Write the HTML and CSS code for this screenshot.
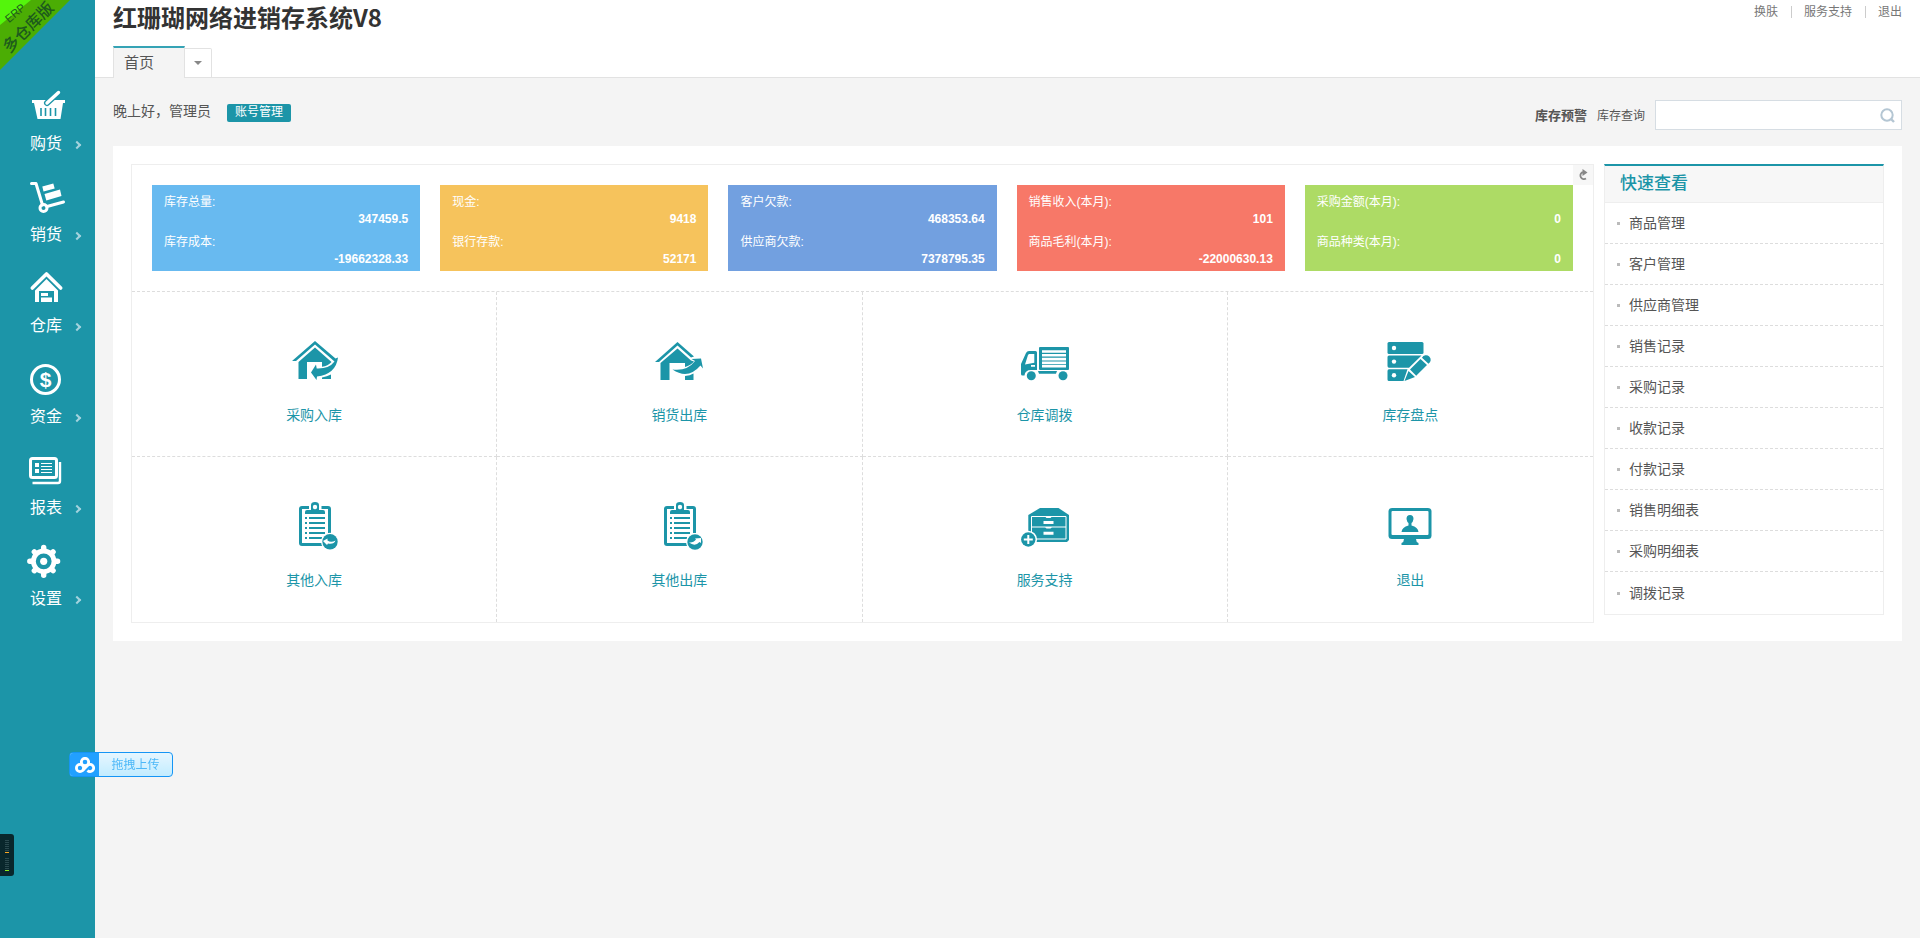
FILE: index.html
```
<!DOCTYPE html>
<html lang="zh-CN">
<head>
    <meta charset="UTF-8">
    <meta name="viewport" content="width=device-width, initial-scale=1.0">
    <title>红珊瑚网络进销存系统V8</title>
    <link rel="stylesheet" href="styles.css">
</head>
<body>
    <div class="sidebar">
        <svg class="ribbon" width="72" height="72" viewBox="0 0 72 72">
            <path d="M0 0H70L0 70Z" fill="#4bad04"/>
            <path d="M0 0H31L0 25Z" fill="#54f50c"/>
            <text class="ribbon-small" x="15" y="17" transform="rotate(-40 15 13)">ERP</text>
            <text class="ribbon-big" x="28" y="33" transform="rotate(-45 28 27)">多仓库版</text>
        </svg>
        <nav class="menu">
            <a href="#" class="menu-item">
                <svg class="menu-icon" viewBox="-3 0 42 36">
                    <path d="M2 13H35V16H33L30.500 32H7.500L4 16H2Z" fill="#fff"/>
                    <path d="M11 21V29M15.500 21V29M20.500 21V29M25.500 21V29" stroke="#1c95a8" stroke-width="1.600"/>
                    <path d="M28.500 5.500L17 16" stroke="#1c95a8" stroke-width="6" stroke-linecap="round"/>
                    <path d="M28.500 5.500L17 16" stroke="#fff" stroke-width="3.400" stroke-linecap="round"/>
                </svg>
                <span class="menu-text">购货</span>
            </a>
            <a href="#" class="menu-item">
                <svg class="menu-icon" viewBox="-3 0 42 36">
                    <path d="M1.500 5.500H6L12.500 27M17 28.500L33.500 24" fill="none" stroke="#fff" stroke-width="3" stroke-linecap="round" stroke-linejoin="round"/>
                    <circle cx="13.500" cy="30" r="3.500" fill="none" stroke="#fff" stroke-width="3"/>
                    <path d="M12.300 8.500L23.300 5.500L24.700 10.500L13.500 13.500ZM14.500 16L30 11.500L31.500 18L16.300 22.500Z" fill="#fff"/>
                </svg>
                <span class="menu-text">销货</span>
            </a>
            <a href="#" class="menu-item">
                <svg class="menu-icon" viewBox="-3 0 42 36">
                    <path d="M2.300 19L16.500 5L30.700 19" fill="none" stroke="#fff" stroke-width="3.600" stroke-linecap="round" stroke-linejoin="round"/>
                    <path d="M5 33V21.500L16.500 10L28 21.500V33H24V22H9V33Z" fill="#fff"/>
                    <path d="M11 24H18V27H11ZM11 28.500H22V33H11Z" fill="#fff"/>
                </svg>
                <span class="menu-text">仓库</span>
            </a>
            <a href="#" class="menu-item">
                <svg class="menu-icon" viewBox="-3 0 42 36">
                    <circle cx="15.500" cy="19.500" r="14" fill="none" stroke="#fff" stroke-width="3"/>
                    <text class="coin" x="15.500" y="27">$</text>
                </svg>
                <span class="menu-text">资金</span>
            </a>
            <a href="#" class="menu-item">
                <svg class="menu-icon" viewBox="-3 0 42 36">
                    <rect x="0.500" y="7.500" width="26" height="19" rx="2" fill="none" stroke="#fff" stroke-width="3"/>
                    <path d="M30 11V30Q30 32 28 32H2.500" fill="none" stroke="#fff" stroke-width="2.400"/>
                    <path d="M5 12H9V16H5ZM5 18H9V22H5Z" fill="#fff"/>
                    <path d="M11 12.500H22M11 15.500H22M11 18.500H22M11 21.500H22" stroke="#fff"/>
                </svg>
                <span class="menu-text">报表</span>
            </a>
            <a href="#" class="menu-item">
                <svg class="menu-icon" viewBox="-3 0 42 36">
                    <g stroke="#fff" stroke-width="5.400" stroke-linecap="round">
                        <path d="M13.700 5.500V8M13.700 30.700V33.200M-.200 19.300H2M25.300 19.300H27.600"/>
                        <path d="M4.300 9.900L6 11.600M21.500 27.100L23.100 28.700M4.300 28.700L6 27.100M21.500 11.600L23.100 9.900"/>
                    </g>
                    <circle cx="13.700" cy="19.300" r="10.300" fill="none" stroke="#fff" stroke-width="4.800"/>
                    <circle cx="13.700" cy="19.300" r="3.600" fill="#fff"/>
                </svg>
                <span class="menu-text">设置</span>
            </a>
        </nav>
    </div>

    <div class="main">
        <div class="header">
            <div class="header-top">
                <h1>红珊瑚网络进销存系统V8</h1>
                <div class="top-links">
                    <a href="#">换肤</a>
                    <a href="#">服务支持</a>
                    <a href="#">退出</a>
                </div>
            </div>
            <div class="tabs">
                <a href="#" class="tab">首页</a>
                <button class="tab-more" aria-label="更多"></button>
            </div>
        </div>

        <div class="content">
            <div class="toolbar">
                <div class="greeting">
                    <span>晚上好，管理员</span>
                    <button class="account">账号管理</button>
                </div>
                <div class="search">
                    <a href="#" class="warning">库存预警</a>
                    <label for="searchInput">库存查询</label>
                    <div class="search-box">
                        <input type="text" id="searchInput">
                        <svg class="search-icon" width="16" height="16" viewBox="0 0 16 16">
                            <circle cx="7" cy="7" r="5.700" fill="none" stroke="#b4c6d3" stroke-width="2"/>
                            <path d="M11 11L14 14" stroke="#b4c6d3" stroke-width="2.400"/>
                        </svg>
                    </div>
                </div>
            </div>

            <div class="panel">
                <div class="overview">
                    <button class="refresh" aria-label="刷新">
                        <svg width="12" height="12" viewBox="0 0 12 12">
                            <path d="M7 3.500H5A3.600 3.600 0 1 0 9 9.500" fill="none" stroke="#888" stroke-width="1.800"/>
                            <path d="M5.500 0L10.500 3.500L5.500 7Z" fill="#888"/>
                        </svg>
                    </button>
                    <div class="cards">
                        <dl class="card blue">
                            <dt>库存总量:</dt><dd>347459.5</dd>
                            <dt>库存成本:</dt><dd>-19662328.33</dd>
                        </dl>
                        <dl class="card orange">
                            <dt>现金:</dt><dd>9418</dd>
                            <dt>银行存款:</dt><dd>52171</dd>
                        </dl>
                        <dl class="card indigo">
                            <dt>客户欠款:</dt><dd>468353.64</dd>
                            <dt>供应商欠款:</dt><dd>7378795.35</dd>
                        </dl>
                        <dl class="card red">
                            <dt>销售收入(本月):</dt><dd>101</dd>
                            <dt>商品毛利(本月):</dt><dd>-22000630.13</dd>
                        </dl>
                        <dl class="card green">
                            <dt>采购金额(本月):</dt><dd>0</dd>
                            <dt>商品种类(本月):</dt><dd>0</dd>
                        </dl>
                    </div>

                    <div class="shortcuts">
                        <a href="#" class="shortcut">
                            <svg class="shortcut-icon" viewBox="0 0 48 48">
                                <path d="M2 24L25 4L45.500 21.500L48 20.500Q46 37 27 39.500L26.500 43L21 35.500L26 27.500L26.700 31.500Q39 32 44.500 24.500L25 7.500L6 24Z"/>
                                <path d="M25 10.500L41.500 25Q38 29 32 29.700V25H17V42H8.500V25Z"/>
                                <path d="M32 40.500Q37 39.500 41 37.500V42H32Z"/>
                            </svg>
                            <span>采购入库</span>
                        </a>
                        <a href="#" class="shortcut">
                            <svg class="shortcut-icon" viewBox="0 0 48 48">
                                <path d="M0 25L22.500 5L39 19.500L36 20.500L22.500 8.500L4 25Z"/>
                                <path d="M22.500 11.500L36 23.500L39 24.500Q36 28 30 30V26H14.500V43H5.500V26Z"/>
                                <path d="M17.500 32.500Q32 34.500 40 24L36.500 22L46 21.500L48 31.500L45.500 28.500Q33 43 17.500 32.500Z"/>
                                <path d="M30 39Q35 38.500 38.500 36.500V43H30Z"/>
                            </svg>
                            <span>销货出库</span>
                        </a>
                        <a href="#" class="shortcut">
                            <svg class="shortcut-icon" viewBox="0 0 48 48">
                                <rect x="18" y="10" width="30" height="23" rx="1"/>
                                <path d="M21 14.500H45M21 18.300H45M21 22.100H45M21 25.900H45M21 29.300H45" stroke="#fff" stroke-width="2.600"/>
                                <path d="M8 14H14.500Q16 14 16 15.500V33H10Q4 33 3.500 38.500H1.500Q0 38.500 0 37V27L5 16Q6 14 8 14Z"/>
                                <path d="M8 17H13.300V25.700L4 27.500L7 18ZM10 28H14V29.700H10Z" fill="#fff"/>
                                <path d="M17 34H36L35 36.700H18Z"/>
                                <circle cx="10.300" cy="38.700" r="4.500"/>
                                <circle cx="42" cy="38.700" r="4.500"/>
                            </svg>
                            <span>仓库调拨</span>
                        </a>
                        <a href="#" class="shortcut">
                            <svg class="shortcut-icon" viewBox="0 0 48 48">
                                <rect x="1.500" y="5" width="36" height="12" rx="1.500"/>
                                <path d="M3 18.500H35.500L23 30.700H3Q1.500 30.700 1.500 29V20Q1.500 18.500 3 18.500ZM3 32.200H21.500L17.500 44H3Q1.500 44 1.500 42.500V34Q1.500 32.200 3 32.200Z"/>
                                <circle cx="8" cy="11" r="2.200" fill="#fff"/>
                                <circle cx="8" cy="24.600" r="2.200" fill="#fff"/>
                                <circle cx="8" cy="38.200" r="2.200" fill="#fff"/>
                                <path d="M18.500 44L22.500 34L29 40ZM24 32.500L34.500 22L41 28L30.200 38.800ZM36 20.800A4.600 4.600 0 1 1 42.500 26.800Z"/>
                            </svg>
                            <span>库存盘点</span>
                        </a>
                        <a href="#" class="shortcut">
                            <svg class="shortcut-icon" viewBox="0 0 48 48">
                                <path d="M19 5.500H12Q10.500 5.500 10.500 7V41Q10.500 42.500 12 42.500H33M31.500 5.500H38Q39.500 5.500 39.500 7V31" fill="none" stroke="#1c95a8" stroke-width="3"/>
                                <path d="M21 8V3Q21 0 25 0T29 3V8H33Q35 8 35 10V12H15V10Q15 8 17 8Z"/>
                                <circle cx="25" cy="5" r="2.200" fill="#fff"/>
                                <path d="M15 16H17M19 16H35M15 21H17M19 21H35M15 26H17M19 26H35M15 31H17M19 31H35M15 36H17M19 36H32" stroke="#1c95a8" stroke-width="2"/>
                                <circle cx="40" cy="39.700" r="9" fill="#fff"/>
                                <circle cx="40" cy="39.700" r="7.700"/>
                                <path d="M33 39L37.500 36.500L37.500 38.500Q41 41 45.500 38.500Q44 42.500 38 41.500L37 43Z" fill="#fff"/>
                            </svg>
                            <span>其他入库</span>
                        </a>
                        <a href="#" class="shortcut">
                            <svg class="shortcut-icon" viewBox="0 0 48 48">
                                <path d="M19 5.500H12Q10.500 5.500 10.500 7V41Q10.500 42.500 12 42.500H33M31.500 5.500H38Q39.500 5.500 39.500 7V31" fill="none" stroke="#1c95a8" stroke-width="3"/>
                                <path d="M21 8V3Q21 0 25 0T29 3V8H33Q35 8 35 10V12H15V10Q15 8 17 8Z"/>
                                <circle cx="25" cy="5" r="2.200" fill="#fff"/>
                                <path d="M15 16H17M19 16H35M15 21H17M19 21H35M15 26H17M19 26H35M15 31H17M19 31H35M15 36H17M19 36H32" stroke="#1c95a8" stroke-width="2"/>
                                <circle cx="40" cy="40" r="9" fill="#fff"/>
                                <circle cx="40" cy="40" r="7.700"/>
                                <path d="M34 40.500Q38.500 41 41 37.500L40 36.500L46 36V41L44.500 40Q40 45 34 40.500Z" fill="#fff"/>
                            </svg>
                            <span>其他出库</span>
                        </a>
                        <a href="#" class="shortcut">
                            <svg class="shortcut-icon" viewBox="0 0 48 48">
                                <path d="M19 6H37.500L48 13V38L46 40H9L7.300 38V13Z"/>
                                <path d="M10.500 14.500H45V37H10.500ZM10.500 25H45" fill="none" stroke="#fff"/>
                                <path d="M24 14.500H31L29.500 16H25.500ZM24 25H31L29.500 26.500H25.500ZM22.500 19H32.500V22H22.500ZM22.500 29.700H32.500V32.700H22.500Z" fill="#fff"/>
                                <circle cx="7.300" cy="37.500" r="8.800" fill="#fff"/>
                                <circle cx="7.300" cy="37.500" r="7.200"/>
                                <path d="M7.300 33V42M2.800 37.500H11.800" stroke="#fff" stroke-width="2"/>
                            </svg>
                            <span>服务支持</span>
                        </a>
                        <a href="#" class="shortcut">
                            <svg class="shortcut-icon" viewBox="0 0 48 48">
                                <rect x="2.500" y="6" width="43" height="31" rx="3.500"/>
                                <rect x="5.500" y="9" width="37" height="24" rx="1" fill="#fff"/>
                                <path d="M18 37H30Q30 40 32.500 41V43H15.500V41Q18 40 18 37Z"/>
                                <path d="M24 13Q27.500 13 27.500 17Q27 20 25.500 21V23.500Q32 25 32.500 30H15.500Q16 25 22.500 23.500V21Q21 20 20.500 17Q20.500 13 24 13Z"/>
                            </svg>
                            <span>退出</span>
                        </a>
                    </div>
                </div>

                <div class="quick">
                    <h2>快速查看</h2>
                    <ul>
                        <li><a href="#">商品管理</a></li>
                        <li><a href="#">客户管理</a></li>
                        <li><a href="#">供应商管理</a></li>
                        <li><a href="#">销售记录</a></li>
                        <li><a href="#">采购记录</a></li>
                        <li><a href="#">收款记录</a></li>
                        <li><a href="#">付款记录</a></li>
                        <li><a href="#">销售明细表</a></li>
                        <li><a href="#">采购明细表</a></li>
                        <li><a href="#">调拨记录</a></li>
                    </ul>
                </div>
            </div>
        </div>
    </div>

    <!-- floating widgets -->
    <button class="upload">
        <span class="upload-logo">
            <svg width="20" height="16" viewBox="0 0 20 16">
                <g fill="none" stroke="#fff" stroke-width="2.800">
                    <circle cx="10" cy="5" r="3.700"/>
                    <circle cx="5" cy="11" r="3.600"/>
                    <path d="M7.600 13.500L12.500 8.500A3.600 3.600 0 1 1 12.500 13.500"/>
                </g>
            </svg>
        </span>
        <span class="upload-text">拖拽上传</span>
    </button>
    <div class="meter">
        <svg width="4" height="31" viewBox="0 0 4 31">
            <path d="M2 0V12M2 18V30" stroke="#2b4a4f" stroke-width="4" stroke-dasharray="1 1"/>
            <path d="M0 12H4V13H0Z" fill="#f9a825"/>
            <path d="M0 30H4V31H0Z" fill="#8bec1e"/>
        </svg>
    </div>
</body>
</html>
```
FILE: styles.css
```
*,
*::before,
*::after {
    box-sizing: border-box;
}

body {
    margin: 0;
    min-height: 100vh;
    display: flex;
    background-color: #f4f4f4;
    color: #555;
    font-family: "Liberation Sans", "Noto Sans CJK SC", sans-serif;
    font-size: 12px;
}

a {
    color: inherit;
    text-decoration: none;
}

button {
    border: none;
    padding: 0;
    font-family: inherit;
    cursor: pointer;
}

/* left menu */
.sidebar {
    position: relative;
    flex: none;
    width: 95px;
    padding-top: 87px;
    background-color: #1c95a8;
}

.ribbon {
    position: absolute;
    top: 0;
    left: 0;
    overflow: visible;
}

.ribbon text {
    fill: #1d5a1d;
    text-anchor: middle;
}

.ribbon-small {
    font-size: 11px;
}

.ribbon-big {
    font-size: 16px;
    font-weight: 500;
}

.menu-item {
    position: relative;
    display: flex;
    flex-direction: column;
    gap: 11px;
    padding: 0 0 24px 27px;
    color: #fff;
}

.menu-icon {
    width: 42px;
    height: 36px;
}

.menu-text {
    padding-left: 3px;
    font-size: 16px;
    line-height: 20px;
}

.menu-item::after {
    content: "";
    position: absolute;
    right: 15px;
    bottom: 30px;
    width: 6px;
    height: 6px;
    border-top: 2px solid #a4d3de;
    border-right: 2px solid #a4d3de;
    transform: rotate(45deg);
}

.coin {
    fill: #fff;
    font-size: 21px;
    font-weight: bold;
    text-anchor: middle;
}

/* header */
.main {
    flex: 1;
    min-width: 0;
}

.header {
    padding: 0 18px;
    background-color: #fff;
    border-bottom: 1px solid #e2e2e2;
}

.header-top {
    display: flex;
    justify-content: space-between;
    height: 46px;
}

h1 {
    margin: 0;
    color: #333;
    font-family: "Noto Sans CJK SC", sans-serif;
    font-size: 24px;
    line-height: 34px;
}

.top-links {
    display: flex;
    align-items: center;
    height: 24px;
    color: #777;
    line-height: 12px;
}

.top-links a + a {
    margin-left: 13px;
    padding-left: 12px;
    border-left: 1px solid #ccc;
}

.tabs {
    display: flex;
    align-items: flex-end;
    margin-bottom: -1px;
}

.tab {
    width: 72px;
    height: 32px;
    padding-left: 10px;
    border: 1px solid #e2e2e2;
    border-top: 2px solid #35a3b5;
    border-bottom: none;
    background-color: #f4f4f4;
    font-size: 15px;
    line-height: 30px;
}

.tab-more {
    display: flex;
    align-items: center;
    justify-content: center;
    width: 27px;
    height: 30px;
    border: 1px solid #e2e2e2;
    border-left: none;
    border-radius: 0 2px 0 0;
    background-color: #fff;
}

.tab-more::after {
    content: "";
    border: 4px solid transparent;
    border-top-color: #888;
    border-bottom: none;
}

/* content */
.content {
    padding: 22px 18px;
}

.toolbar {
    display: flex;
    justify-content: space-between;
    height: 46px;
}

.greeting {
    display: flex;
    align-items: flex-start;
    gap: 16px;
    font-size: 14px;
    line-height: 22px;
}

.account {
    width: 64px;
    height: 18px;
    margin-top: 4px;
    padding-bottom: 2px;
    border-radius: 2px;
    background-color: #1c95a8;
    color: #fff;
    font-size: 12px;
    line-height: 16px;
}

.search {
    display: flex;
    align-items: center;
    gap: 10px;
    height: 30px;
}

.search a,
.search label {
    padding-bottom: 2px;
}

.warning {
    font-size: 13px;
    font-weight: bold;
}

.search-box {
    position: relative;
}

.search-box input {
    display: block;
    width: 247px;
    height: 30px;
    padding: 0 28px 0 8px;
    border: 1px solid #d6dde3;
    background-color: #fff;
    font-size: 12px;
}

.search-icon {
    position: absolute;
    top: 8px;
    right: 6px;
}

.panel {
    display: flex;
    align-items: flex-start;
    gap: 10px;
    padding: 18px;
    background-color: #fff;
}

.overview {
    position: relative;
    flex: 1;
    min-width: 0;
    border: 1px solid #eee;
}

.refresh {
    position: absolute;
    top: 0;
    right: 0;
    display: flex;
    align-items: center;
    justify-content: center;
    width: 20px;
    height: 20px;
    background-color: #f7f7f7;
}

.cards {
    display: flex;
    gap: 20px;
    padding: 20px;
    border-bottom: 1px dashed #ddd;
}

.card {
    flex: 1;
    margin: 0;
    padding: 7px 12px 5px;
    color: #fff;
    line-height: 20px;
}

.card dd {
    margin: 0;
    text-align: right;
    font-weight: bold;
    line-height: 14px;
}

.card dd + dt {
    margin-top: 6px;
}

.blue {
    background-color: #68baf0;
}

.orange {
    background-color: #f6c35c;
}

.indigo {
    background-color: #72a0e0;
}

.red {
    background-color: #f77868;
}

.green {
    background-color: #addb65;
}

.shortcuts {
    display: grid;
    grid-template-columns: repeat(4, 1fr);
}

.shortcut {
    display: flex;
    flex-direction: column;
    align-items: center;
    gap: 20px;
    padding: 45px 0 32px;
    color: #1c95a8;
    font-size: 14px;
    line-height: 20px;
    border-right: 1px dashed #ddd;
}

.shortcut:nth-child(4n) {
    border-right: none;
}

.shortcut:nth-child(-n+4) {
    padding-bottom: 31px;
    border-bottom: 1px dashed #ddd;
}

.shortcut-icon {
    width: 48px;
    height: 48px;
    fill: #1c95a8;
}

.quick {
    flex: none;
    width: 280px;
    border: 1px solid #eee;
    border-top: 2px solid #1c95a8;
}

.quick h2 {
    margin: 0;
    padding-left: 15px;
    border-bottom: 1px solid #eee;
    background-color: #f7f7f7;
    color: #1c95a8;
    font-size: 17px;
    font-weight: 500;
    line-height: 36px;
}

.quick ul {
    margin: 0;
    padding: 0;
    list-style: none;
}

.quick li {
    display: flex;
    align-items: center;
    gap: 9px;
    padding-left: 12px;
    border-bottom: 1px dashed #ddd;
    font-size: 14px;
    line-height: 40px;
}

.quick li::before {
    content: "";
    width: 3px;
    height: 3px;
    background-color: #bbb;
}

.quick li:last-child {
    border-bottom: none;
    line-height: 42px;
}

/* floating widgets */
.upload {
    position: fixed;
    left: 69px;
    bottom: 161px;
    display: flex;
    width: 104px;
    height: 25px;
    border: 1px solid #1595f5;
    border-radius: 4px;
    overflow: hidden;
    background: linear-gradient(#e6f6ff, #c2ecff);
    color: #4db8f8;
    font-size: 12px;
    line-height: 24px;
}

.upload-logo {
    display: flex;
    align-items: center;
    justify-content: center;
    width: 29px;
    height: 23px;
    background-color: #22a0ff;
}

.upload-text {
    flex: 1;
}

.meter {
    position: fixed;
    left: 0;
    bottom: 62px;
    display: flex;
    padding: 6px 5px 5px;
    border-radius: 0 3px 3px 0;
    background-color: #09272c;
}
```
